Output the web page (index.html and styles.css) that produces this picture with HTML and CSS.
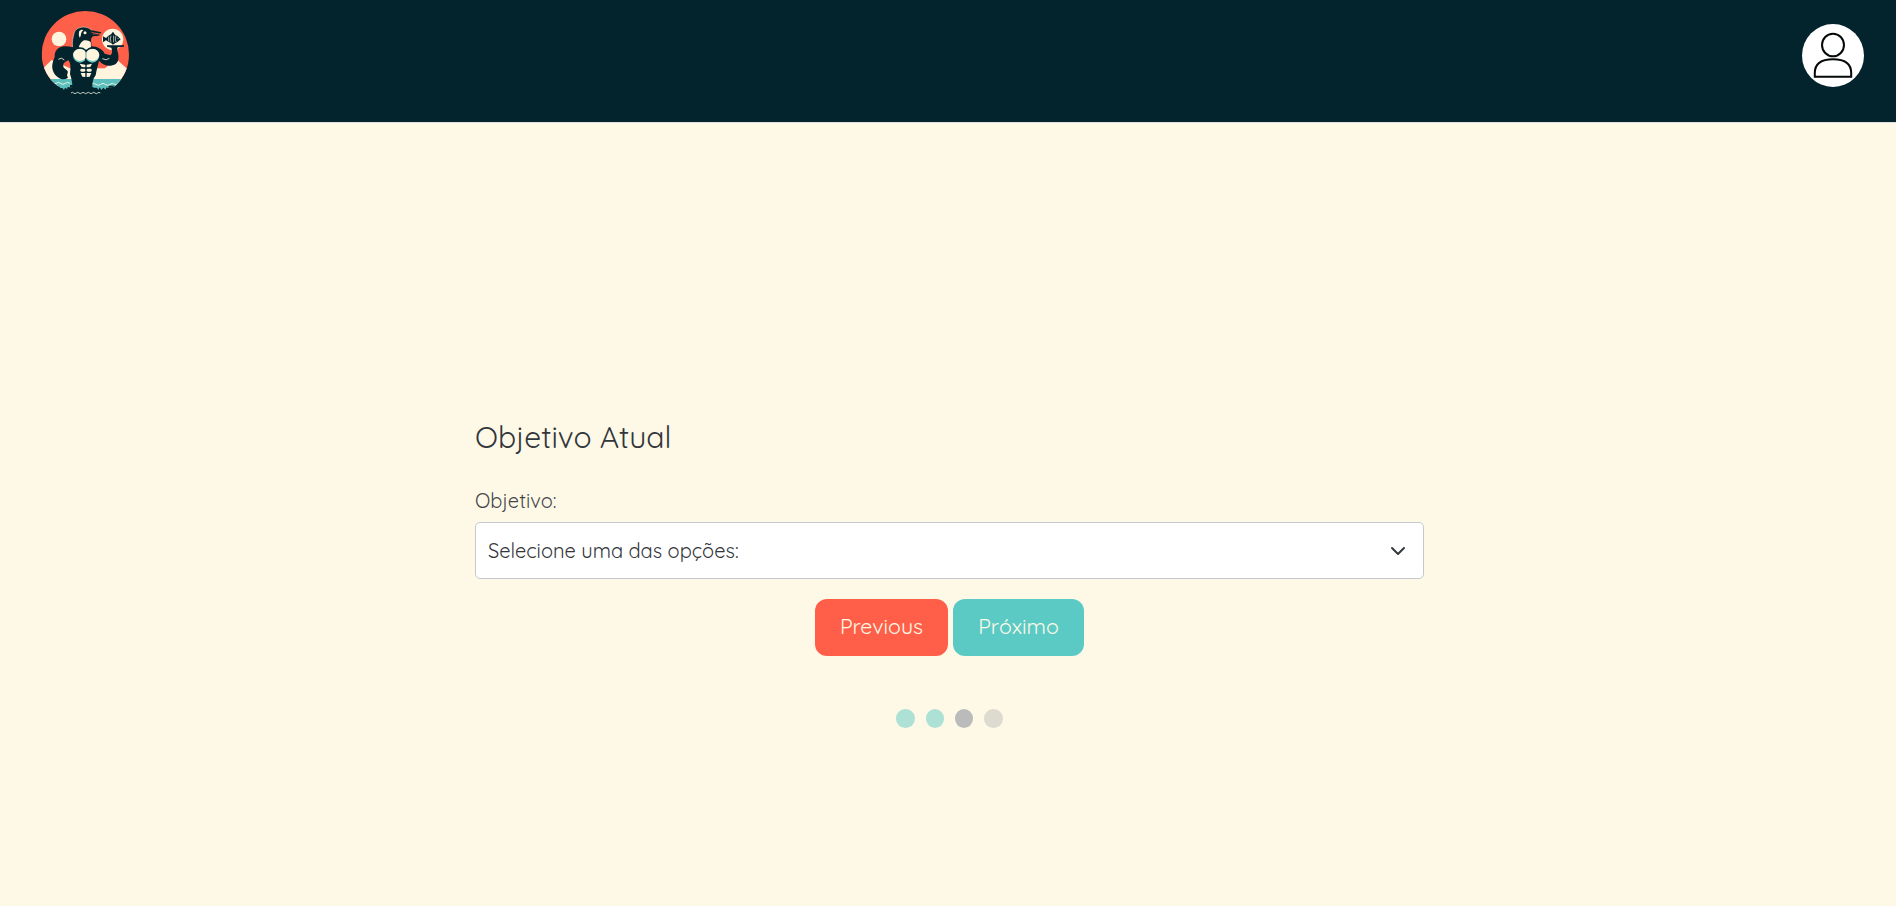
FILE: index.html
```html
<!DOCTYPE html>
<html lang="pt-BR">
<head>
<meta charset="utf-8">
<title>Objetivo Atual</title>
<link rel="stylesheet" href="styles.css">
</head>
<body>
<header class="topbar">
  <a class="brand" href="#" aria-label="Início">
    <svg class="logo" viewBox="0 0 330 360">
      <defs><clipPath id="disc"><path d="M35 163A131 130 0 0 1 297 163C297 202 282 232 256 258L245 262H88C55 238 35 204 35 163Z"/></clipPath></defs>
      <g clip-path="url(#disc)">
        <path fill="#fd5f48" d="M30 28H300V270H30Z"/>
        <path fill="#fff5df" d="M30 214L65 180L120 205H225L258 176L300 214V270H30Z"/>
        <path fill="#5bbfbd" d="M30 237H300V270H30Z"/>
        <path fill="#03242d" d="M30 258H88V275H30ZM120 255H186V275H120ZM235 257H300V275H235Z"/>
        <path fill="none" stroke="#e6f3df" stroke-width="3" d="M50 250q7-6 14 0t14 0t14 0t14 0t14 0M184 253q7-6 14 0t14 0t14 0t14 0t14 0t14 0"/>
      </g>
      <path fill="#5bbfbd" d="M88 258H112V267L105 263L102 270L97 264H91ZM189 258H235V264L229 262L227 269L220 263L214 270L209 262L205 270L201 263H191Z"/>
      <circle cx="87" cy="117" r="22" fill="#fff5df"/>
      <circle cx="248" cy="118" r="32" fill="#fff5df"/>
      <path fill="#03242d" d="M128 142C125 123 130 112 132 101C135 86 151 79 168 82C177 83 181 88 185 91L214 97L213 100L196 101L211 104L206 107L189 109C184 113 181 119 184 128L184 139C203 139 218 149 224 161L241 166C249 159 246 151 244 143L231 140V136H282V140L263 142L261 149C267 165 268 183 258 191C241 202 222 199 207 182C203 198 199 213 197 226C188 237 187 249 187 260C190 273 205 276 217 281C194 288 139 288 119 281L127 269C128 255 126 240 120 222C122 205 123 190 115 181C107 184 99 190 100 196C98 204 107 207 112 212C117 219 107 223 114 232C110 240 95 239 86 233C72 224 65 209 67 194C69 183 71 178 74 171C73 159 77 150 86 144C97 137 114 138 128 142Z"/>
      <path fill="none" stroke="#fff0d8" stroke-width="1.5" d="M128 141C125 123 130 112 132 101C135 86 151 79 168 82C177 83 181 88 185 91"/>
      <path fill="none" stroke="#fd5f48" stroke-width="2" d="M184 97L204 101L188 102"/>
      <path fill="#fff5df" d="M147 95C151 89 157 88 160 91C149 100 156 107 149 113Q145 105 147 95Z"/>
      <circle cx="165" cy="98" r="4.5" fill="#fff5df"/>
      <path fill="#fff5df" d="M146 142Q152 126 162 121Q174 119 182 126L183 142L168 150Z"/>
      <circle cx="150" cy="167" r="23" fill="#69c5c2" stroke="#03242d" stroke-width="4"/>
      <circle cx="187" cy="167" r="23" fill="#69c5c2" stroke="#03242d" stroke-width="4"/>
      <path fill="#fff5df" d="M129 164A21 21 0 0 1 167 156V174Q162 182 150 183Q134 181 129 164ZM170 156A21 21 0 0 1 208 164Q205 182 188 183Q174 181 170 174Z"/>
      <path fill="none" stroke="#fff5df" stroke-width="2.5" d="M85 178Q94 170 103 180M217 176Q229 183 238 175"/>
      <g fill="#fff5df">
        <path d="M149 191L166 194V202L155 201Z"/><path d="M186 191L170 194V202L181 201Z"/>
        <rect x="151" y="206" width="15" height="9" rx="4"/><rect x="170" y="206" width="15" height="9" rx="4"/>
        <path d="M152 219H166V231L157 230Z"/><path d="M184 219H170V231L179 230Z"/>
      </g>
      <path fill="#03242d" d="M219 109L228 114Q235 106 243 103L249 95L255 104Q263 106 272 118Q263 127 256 129L249 134L243 129Q234 126 228 121L219 127Z"/>
      <path fill="none" stroke="#fff5df" stroke-width="2" d="M236 110V124M243 107Q239 117 243 127M251 107V127M258 107Q254 117 258 126M264 114V117"/>
      <path fill="none" stroke="#e8eee3" stroke-width="2.5" d="M123 279q4-4 8 0t8 0t8 0t8 0t8 0t8 0t8 0t8 0t8 0t8 0t8 0"/>
    </svg>
  </a>
  <a class="avatar" href="#" aria-label="Perfil">
    <svg viewBox="0 0 62 63"><g fill="none" stroke="#050808" stroke-width="2"><ellipse cx="31" cy="21" rx="11" ry="11.3"/><path d="M12.8 52.7V49C12.8 40 19 35.2 31 35.2S49.2 40 49.2 49V52.7Z"/></g></svg>
  </a>
</header>
<main class="page">
  <form class="wizard">
    <h1 class="title">Objetivo Atual</h1>
    <label class="label" for="goal">Objetivo:</label>
    <div class="select" id="goal" role="combobox" tabindex="0">
      <span class="value">Selecione uma das opções:</span>
      <svg class="chevron" viewBox="0 0 16 16"><path d="M2 5l6 6 6-6"/></svg>
    </div>
    <div class="actions">
      <button class="btn prev" type="button">Previous</button>
      <button class="btn next" type="button">Próximo</button>
    </div>
    <div class="steps">
      <span class="step done"></span><span class="step done"></span><span class="step active"></span><span class="step"></span>
    </div>
  </form>
</main>
</body>
</html>
```
FILE: styles.css
```css
* { box-sizing: border-box; }
body {
  margin: 0;
  height: 906px;
  background: #fef9e7;
  color: #33363a;
  font-family: Quicksand, Lato, sans-serif;
  font-weight: 400;
}
.topbar {
  display: flex;
  justify-content: space-between;
  height: 123px;
  padding: 0 32px 0 30px;
  background: #03242d;
  border-bottom: 1px solid #dee2e6;
}
.brand { display: block; height: 120px; }
.logo { display: block; width: 110px; height: 120px; }
.avatar {
  width: 62px;
  height: 63px;
  margin-top: 24px;
  border-radius: 50%;
  background: #fff;
}
.avatar svg { display: block; }
.page { display: flex; justify-content: center; padding: 294px 0 0 3px; }
.wizard { width: 949px; }
.title {
  margin: 0;
  height: 70px;
  font-size: 30px;
  line-height: 41px;
  font-weight: 400;
}
.label {
  display: block;
  height: 35px;
  color: #45474a;
  font-size: 20px;
  line-height: 28px;
}
.select {
  display: flex;
  align-items: center;
  justify-content: space-between;
  height: 57px;
  padding: 0 17px 0 12px;
  border: 1px solid #c5c9cd;
  border-radius: 5px;
  background: #fff;
  font-size: 20px;
}
.chevron { width: 16px; height: 16px; }
.chevron path {
  fill: none;
  stroke: #343a40;
  stroke-width: 2;
  stroke-linecap: round;
  stroke-linejoin: round;
}
.actions { display: flex; justify-content: center; gap: 5px; margin-top: 20px; }
.btn {
  height: 57px;
  padding: 0 0 3px;
  border: 0;
  border-radius: 12px;
  color: #fef9e7;
  font: 400 21.3px Quicksand, Lato, sans-serif;
}
.prev { width: 133px; background: #ff5f49; }
.next { width: 131px; background: #5bcac5; }
.steps { display: flex; justify-content: center; gap: 10.8px; margin-top: 53px; }
.step { width: 18.5px; height: 19px; border-radius: 50%; background: #dddad0; }
.done { background: #ade1d5; }
.active { background: #bbb; }
```
